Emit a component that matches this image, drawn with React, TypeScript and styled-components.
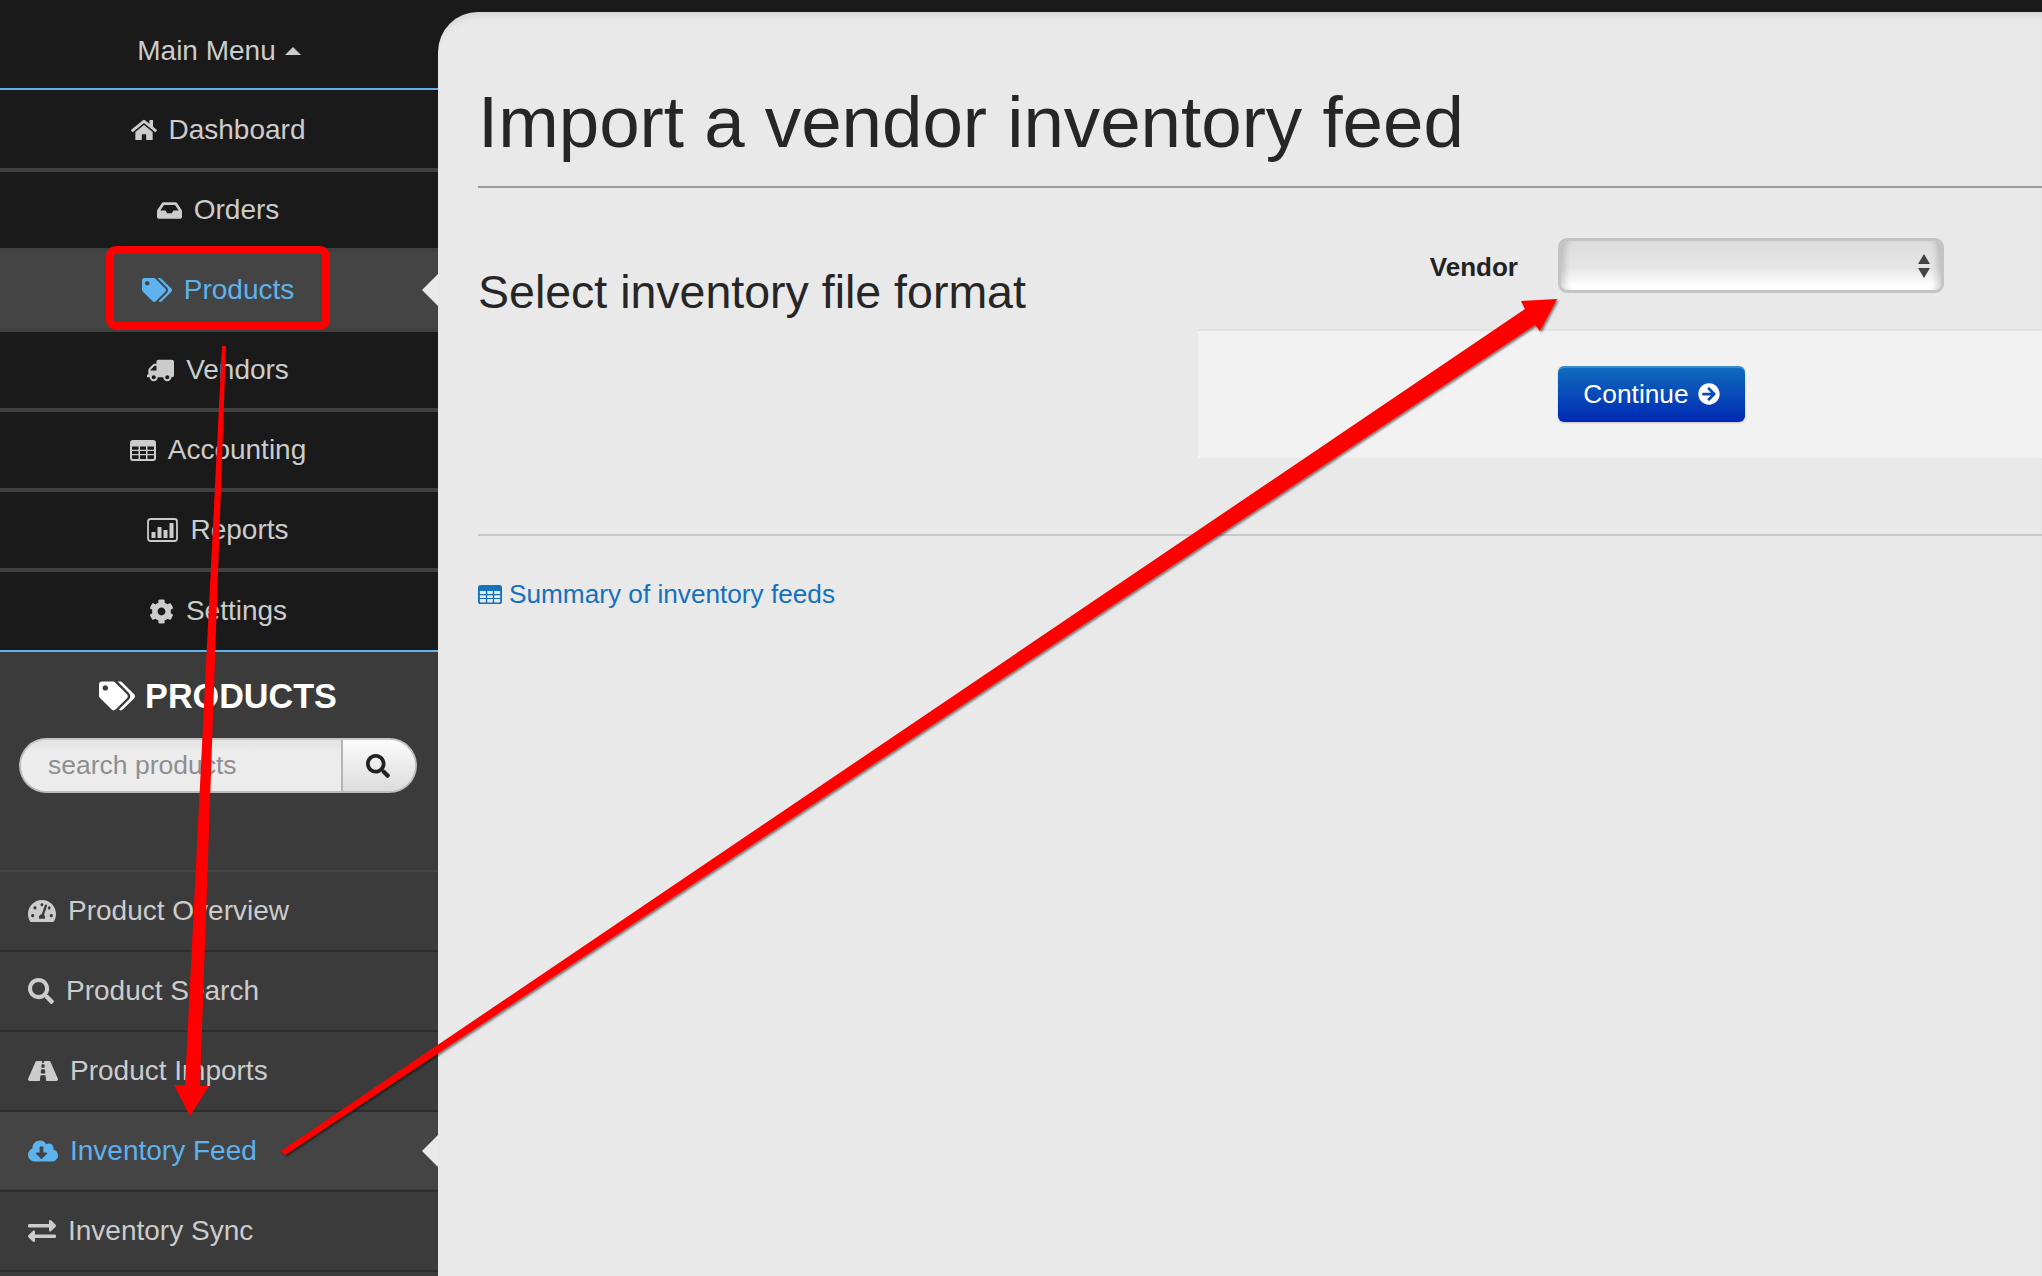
import React from 'react';
import styled, { createGlobalStyle } from 'styled-components';
import {
  FaHome,
  FaInbox,
  FaTags,
  FaTruck,
  FaCog,
  FaTachometerAlt,
  FaSearch,
  FaRoad,
  FaCloudDownloadAlt,
  FaExchangeAlt,
  FaArrowCircleRight,
} from 'react-icons/fa';

const Global = createGlobalStyle`
  html, body {
    margin: 0;
    padding: 0;
    background: #1a1a1a;
  }
  * {
    box-sizing: border-box;
  }
`;

const Page = styled.div`
  position: relative;
  display: flex;
  width: 2042px;
  height: 1276px;
  overflow: hidden;
  background: #1a1a1a;
  font-family: 'Liberation Sans', Arial, sans-serif;
  font-size: 28px;
  color: #ccc;
`;

const Sidebar = styled.aside`
  flex: 0 0 438px;
  min-width: 0;
  display: flex;
  flex-direction: column;
`;

const MenuHeader = styled.div`
  height: 92px;
  padding-top: 12px;
  display: flex;
  align-items: center;
  justify-content: center;
  gap: 9px;
  border-bottom: 2px solid #1a1a1a;
  position: relative;

  &::after {
    content: '';
    position: absolute;
    left: 0;
    right: 0;
    bottom: 0;
    height: 2px;
    background: #5eb2ee;
  }
`;

const Caret = styled.span`
  width: 0;
  height: 0;
  border-left: 8px solid transparent;
  border-right: 8px solid transparent;
  border-bottom: 8px solid #ccc;
`;

const NavRow = styled.div<{ $active?: boolean; $last?: boolean }>`
  position: relative;
  height: 80px;
  padding-right: 2px;
  display: flex;
  align-items: center;
  justify-content: center;
  gap: 12px;
  background: ${(p) => (p.$active ? '#444' : '#1a1a1a')};
  color: ${(p) => (p.$active ? '#5eb2ee' : '#ccc')};
  border-bottom: ${(p) => (p.$last ? '2px solid #5eb2ee' : '4px solid #404040')};
`;

const SubPanel = styled.div`
  flex: 1;
  background: #3b3b3b;
  display: flex;
  flex-direction: column;
`;

const SubTitle = styled.h2`
  margin: 24px 0 0;
  height: 40px;
  padding-right: 2px;
  display: flex;
  align-items: center;
  justify-content: center;
  gap: 10px;
  font-size: 34.2px;
  font-weight: bold;
  color: #fff;
`;

const SearchBox = styled.div`
  margin: 22px 21px 0 19px;
  height: 55px;
  display: flex;
  border-radius: 28px;
  border: 2px solid #bbb;
  border-top-color: #c4c4c4;
  overflow: hidden;
  background: #e8e8e8;
`;

const SearchInput = styled.input`
  flex: 1;
  width: 0;
  min-width: 0;
  border: 0;
  outline: 0;
  padding: 0 0 0 27px;
  font: inherit;
  font-size: 26.5px;
  color: #333;
  background: linear-gradient(#e2e2e2, #ececec 25%);

  &::placeholder {
    color: #8e8e8e;
    opacity: 1;
  }
`;

const SearchButton = styled.button`
  flex: 0 0 74px;
  border: 0;
  border-left: 2px solid #b5b5b5;
  padding: 0 2px 0 0;
  display: flex;
  align-items: center;
  justify-content: center;
  color: #222;
  background: linear-gradient(#fbfbfb, #dcdcdc);
`;

const SubList = styled.div`
  margin-top: 77px;
  border-top: 2px solid #454545;
`;

const SubRow = styled.div<{ $active?: boolean }>`
  position: relative;
  height: 80px;
  padding: 0 0 0 28px;
  display: flex;
  align-items: center;
  gap: 12px;
  background: ${(p) => (p.$active ? '#444' : '#3b3b3b')};
  color: ${(p) => (p.$active ? '#5eb2ee' : '#ccc')};
  border-bottom: 2px solid #2d2d2d;
  box-shadow: inset 0 -1px 0 #3b3b3b;
`;

const IconSlot = styled.span<{ $w: number; $flip?: boolean }>`
  flex: 0 0 auto;
  width: ${(p) => p.$w}px;
  display: inline-flex;
  align-items: center;
  justify-content: center;
  transform: ${(p) => (p.$flip ? 'scaleX(-1)' : 'none')};

  svg {
    display: block;
    width: 100%;
    height: auto;
  }
`;

const Pointer = styled.span`
  position: absolute;
  right: 0;
  top: 50%;
  margin-top: -16px;
  width: 0;
  height: 0;
  border-top: 16px solid transparent;
  border-bottom: 16px solid transparent;
  border-right: 16px solid #e9e9e9;
`;

const Main = styled.main`
  flex: 1;
  min-width: 0;
  margin-top: 12px;
  padding-left: 40px;
  background: #e9e9e9;
  border-top-left-radius: 40px;
  box-shadow: inset 0 8px 10px -6px rgba(0, 0, 0, 0.12);
`;

const Title = styled.h1`
  margin: 0;
  height: 176px;
  padding-top: 60px;
  border-bottom: 2px solid #9b9b9b;
  font-size: 72.7px;
  line-height: 100px;
  font-weight: normal;
  color: #262626;
`;

const Section = styled.section`
  display: flex;
  padding-top: 50px;
`;

const SectionTitle = styled.h3`
  flex: 0 0 720px;
  margin: 0;
  font-size: 46.5px;
  line-height: 64px;
  font-weight: normal;
  color: #262626;
  padding-top: 22px;
`;

const FormCol = styled.div`
  flex: 1;
`;

const FormRow = styled.div`
  display: flex;
  align-items: center;
  gap: 40px;
`;

const FieldLabel = styled.label`
  flex: 0 0 320px;
  padding-top: 3px;
  text-align: right;
  font-size: 26px;
  font-weight: bold;
  color: #222;
`;

const SelectWrap = styled.div`
  position: relative;
  width: 386px;
  height: 55px;
`;

const VendorSelect = styled.select`
  display: block;
  width: 100%;
  height: 100%;
  appearance: none;
  outline: 0;
  border: 3px solid #c4c4c4;
  border-radius: 9px;
  background: linear-gradient(#dcdcdc, #e6e6e6 55%, #fff 92%);
  box-shadow: inset 9px 0 6px -5px rgba(0, 0, 0, 0.16), inset -9px 0 6px -5px rgba(0, 0, 0, 0.16);
`;

const SelectArrow = styled.span<{ $down?: boolean }>`
  position: absolute;
  right: 14px;
  top: ${(p) => (p.$down ? '30px' : '16px')};
  width: 0;
  height: 0;
  border-left: 6px solid transparent;
  border-right: 6px solid transparent;
  border-top: ${(p) => (p.$down ? '10px solid #444' : '0')};
  border-bottom: ${(p) => (p.$down ? '0' : '10px solid #444')};
`;

const FormFooter = styled.div`
  margin-top: 36px;
  height: 129px;
  padding: 35px 0 0 360px;
  border-top: 2px solid #e2e2e2;
  background: #f2f2f2;
`;

const ContinueButton = styled.button`
  width: 187px;
  height: 56px;
  display: flex;
  align-items: center;
  justify-content: center;
  gap: 9px;
  padding: 0;
  border: 0;
  border-radius: 6px;
  font: inherit;
  font-size: 26.3px;
  color: #fff;
  background: linear-gradient(#106dbf, #0028b3);
  box-shadow: inset 0 2px 0 rgba(255, 255, 255, 0.2), 0 1px 2px rgba(0, 0, 0, 0.2);
`;

const Divider = styled.hr`
  margin: 76px 0 0;
  height: 2px;
  border: 0;
  background: #c8c8c8;
`;

const SummaryLink = styled.a`
  margin-top: 43px;
  display: flex;
  align-items: center;
  gap: 7px;
  font-size: 26.2px;
  color: #1471bd;
  cursor: pointer;
`;

const Annotations = styled.svg`
  position: absolute;
  left: 0;
  top: 0;
  pointer-events: none;
`;

const TableIcon = () => (
  <svg viewBox="0 0 26 21">
    <path
      fillRule="evenodd"
      fill="currentColor"
      d="M3 0h20a3 3 0 0 1 3 3v15a3 3 0 0 1-3 3H3a3 3 0 0 1-3-3V3a3 3 0 0 1 3-3zM2 6.5v3.2h6.5V6.5zM10 6.5v3.2h6V6.5zM17.500 6.500v3.200H24V6.500zM2 11v3h6.500v-3zM10 11v3h6v-3zM17.500 11v3H24v-3zM2 15.300V18a1 1 0 0 0 1 1h5.500v-3.700zM10 15.300V19h6v-3.700zM17.500 15.300V19H23a1 1 0 0 0 1-1v-2.700z"
    />
  </svg>
);

const ChartIcon = () => (
  <svg viewBox="0 0 31 24">
    <rect x="1" y="1" width="29" height="22" rx="2.5" fill="none" stroke="currentColor" strokeWidth="1.8" />
    <path d="M4.500 14h4v6h-4zM10.500 9h4v11h-4zM16.500 12h4v8h-4zM22.500 5h4v15h-4z" fill="currentColor" />
  </svg>
);

const mainNav = [
  { label: 'Dashboard', icon: <FaHome />, w: 26 },
  { label: 'Orders', icon: <FaInbox />, w: 25 },
  { label: 'Products', icon: <FaTags />, w: 30, active: true },
  { label: 'Vendors', icon: <FaTruck />, w: 27, flip: true },
  { label: 'Accounting', icon: <TableIcon />, w: 26 },
  { label: 'Reports', icon: <ChartIcon />, w: 31 },
  { label: 'Settings', icon: <FaCog />, w: 25 },
];

const subNav = [
  { label: 'Product Overview', icon: <FaTachometerAlt />, w: 28 },
  { label: 'Product Search', icon: <FaSearch />, w: 26 },
  { label: 'Product Imports', icon: <FaRoad />, w: 30 },
  { label: 'Inventory Feed', icon: <FaCloudDownloadAlt />, w: 30, active: true },
  { label: 'Inventory Sync', icon: <FaExchangeAlt />, w: 28 },
];

function App() {
  return (
    <Page>
      <Global />
      <Sidebar>
        <MenuHeader>
          Main Menu <Caret />
        </MenuHeader>
        {mainNav.map((item, i) => (
          <NavRow key={item.label} $active={item.active} $last={i === mainNav.length - 1}>
            <IconSlot $w={item.w} $flip={item.flip}>{item.icon}</IconSlot>
            {item.label}
            {item.active && <Pointer />}
          </NavRow>
        ))}
        <SubPanel>
          <SubTitle>
            <IconSlot $w={36}><FaTags /></IconSlot>
            PRODUCTS
          </SubTitle>
          <SearchBox>
            <SearchInput placeholder="search products" />
            <SearchButton><FaSearch size={24} /></SearchButton>
          </SearchBox>
          <SubList>
            {subNav.map((item) => (
              <SubRow key={item.label} $active={item.active}>
                <IconSlot $w={item.w}>{item.icon}</IconSlot>
                {item.label}
                {item.active && <Pointer />}
              </SubRow>
            ))}
          </SubList>
        </SubPanel>
      </Sidebar>

      <Main>
        <Title>Import a vendor inventory feed</Title>
        <Section>
          <SectionTitle>Select inventory file format</SectionTitle>
          <FormCol>
            <FormRow>
              <FieldLabel>Vendor</FieldLabel>
              <SelectWrap>
                <VendorSelect />
                <SelectArrow />
                <SelectArrow $down />
              </SelectWrap>
            </FormRow>
            <FormFooter>
              <ContinueButton>
                Continue
                <IconSlot $w={22}><FaArrowCircleRight /></IconSlot>
              </ContinueButton>
            </FormFooter>
          </FormCol>
        </Section>
        <Divider />
        <SummaryLink>
          <IconSlot $w={24}><TableIcon /></IconSlot>
          Summary of inventory feeds
        </SummaryLink>
      </Main>

      {/* red markup drawn on top of the screenshot */}
      <Annotations width="2042" height="1276" viewBox="0 0 2042 1276">
        <defs>
          <filter id="arrowShadow" x="-5%" y="-5%" width="110%" height="110%">
            <feDropShadow dx="1.5" dy="1.5" stdDeviation="1" floodColor="#000" floodOpacity="0.55" />
          </filter>
        </defs>
        <rect x="110" y="250" width="216" height="76" rx="6" fill="none" stroke="#ff0000" strokeWidth="8" />
        <polygon points="222,346 226,346 200,1086 209,1086 190,1116 174,1085 185,1085" fill="#ff0000" />
        <polygon
          points="281,1151 285,1155 1535,325 1540,331 1557,299 1521,301 1525,309"
          fill="#ff0000"
          filter="url(#arrowShadow)"
        />
      </Annotations>
    </Page>
  );
}

export default App;
